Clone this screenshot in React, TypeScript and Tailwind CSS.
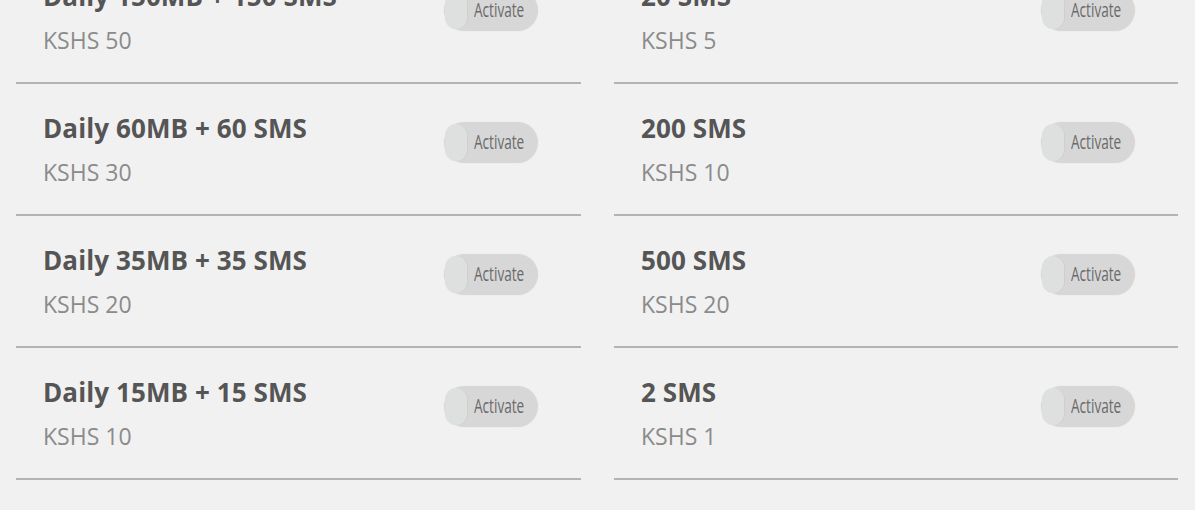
import React from 'react'

type Bundle = { name: string; price: string }

const left: Bundle[] = [
  { name: 'Daily 150MB + 150 SMS', price: 'KSHS 50' },
  { name: 'Daily 60MB + 60 SMS', price: 'KSHS 30' },
  { name: 'Daily 35MB + 35 SMS', price: 'KSHS 20' },
  { name: 'Daily 15MB + 15 SMS', price: 'KSHS 10' },
]

const right: Bundle[] = [
  { name: '20 SMS', price: 'KSHS 5' },
  { name: '200 SMS', price: 'KSHS 10' },
  { name: '500 SMS', price: 'KSHS 20' },
  { name: '2 SMS', price: 'KSHS 1' },
]

function Toggle() {
  return (
    <button className="relative mt-[10px] h-[41px] w-[94px] shrink-0 rounded-full bg-[#d7d7d7] shadow-[0_0_2px_rgba(0,0,0,0.06)]">
      {/* knob sits on the left, slightly lighter */}
      <span className="absolute left-[1px] top-[2px] h-[37px] w-[22px] rounded-full bg-[#dedfdf] shadow-[1px_0_1px_rgba(0,0,0,0.04)]" />
      <span className="absolute left-[30px] top-[8px] inline-block origin-left scale-x-[0.68] font-['Open_Sans',sans-serif] text-[20px] leading-[24px] text-[#6a6a6a]">
        Activate
      </span>
    </button>
  )
}

function Row({ b }: { b: Bundle }) {
  return (
    <div className="flex h-[132px] items-start justify-between border-b-2 border-[#b3b3b3] pl-[27px] pr-[43px] pt-[28px]">
      <div>
        <p className="text-[26px] font-bold leading-[32px] tracking-[0.1px] text-[#555555]">{b.name}</p>
        <p className="mt-[12px] text-[23px] leading-[32px] text-[#8b8b8b]">{b.price}</p>
      </div>
      <Toggle />
    </div>
  )
}

export default function App() {
  return (
    <div className="h-[510px] w-[1195px] overflow-hidden bg-[#f1f1f1] font-['Open_Sans',sans-serif]">
      <div className="mt-[-48px] grid grid-cols-[565px_564px] gap-x-[33px] pl-[16px]">
        <div>
          {left.map((b) => (
            <Row key={b.name} b={b} />
          ))}
        </div>
        <div>
          {right.map((b) => (
            <Row key={b.name} b={b} />
          ))}
        </div>
      </div>
    </div>
  )
}
